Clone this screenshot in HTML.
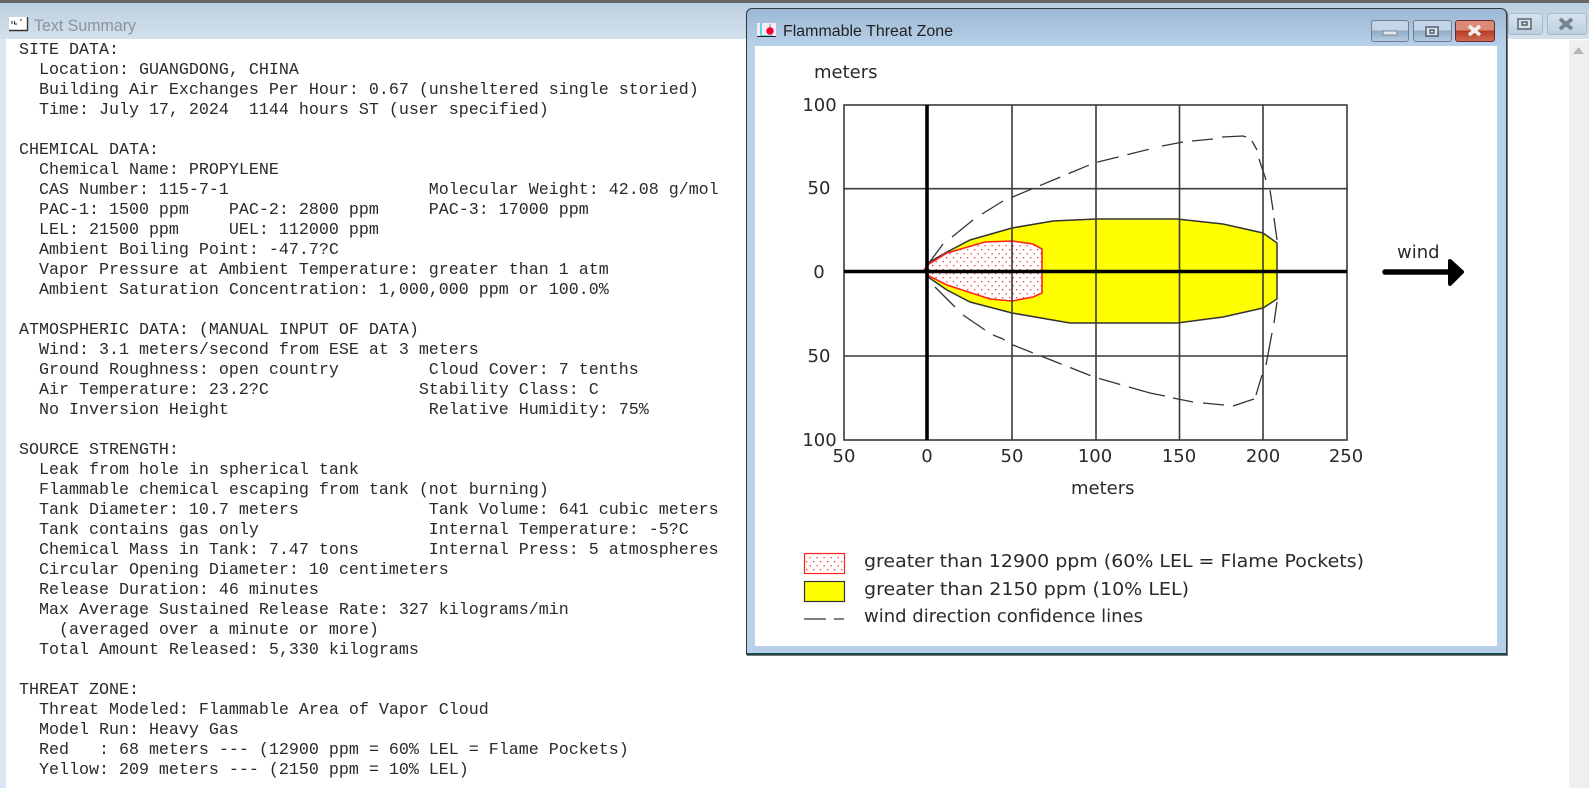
<!DOCTYPE html>
<html><head><meta charset="utf-8"><title>Flammable Threat Zone</title>
<style>
html,body{margin:0;padding:0;width:1589px;height:788px;overflow:hidden;background:#fff}
#bgtitle{position:absolute;left:0;top:0;width:1589px;height:39px;background:linear-gradient(#bccfe0,#d3e0ec);border-top:3px solid #666;box-sizing:border-box}
#leftb{position:absolute;left:0;top:39px;width:6px;height:749px;background:#dbe7f3}
#sb{position:absolute;left:1569px;top:40px;width:20px;height:748px;background:#efefef}
#txt{position:absolute;left:19px;top:41px;margin:0;font:16.67px/20px "Liberation Mono",monospace;color:#2a2a2a;white-space:pre}
#dlg{position:absolute;left:746px;top:8px;width:761px;height:647px;box-sizing:border-box;border:1px solid #2c3a3f;border-bottom:2px solid #1d4a52;border-radius:6px 6px 0 0;background:linear-gradient(#9db8d4,#b8d1ea 38px);box-shadow:1px 1px 0 #777}
#cl{position:absolute;left:755px;top:46px;width:742px;height:600px;background:#fff}
svg{position:absolute;left:0;top:0}
.btn{position:absolute;box-sizing:border-box;border:1px solid #6f7f90;border-radius:3px}
</style></head><body>
<div id="bgtitle"></div><div id="leftb"></div><div id="sb"></div>
<pre id="txt">SITE DATA:
  Location: GUANGDONG, CHINA
  Building Air Exchanges Per Hour: 0.67 (unsheltered single storied)
  Time: July 17, 2024  1144 hours ST (user specified)

CHEMICAL DATA:
  Chemical Name: PROPYLENE
  CAS Number: 115-7-1                    Molecular Weight: 42.08 g/mol
  PAC-1: 1500 ppm    PAC-2: 2800 ppm     PAC-3: 17000 ppm
  LEL: 21500 ppm     UEL: 112000 ppm
  Ambient Boiling Point: -47.7?C
  Vapor Pressure at Ambient Temperature: greater than 1 atm
  Ambient Saturation Concentration: 1,000,000 ppm or 100.0%

ATMOSPHERIC DATA: (MANUAL INPUT OF DATA)
  Wind: 3.1 meters/second from ESE at 3 meters
  Ground Roughness: open country         Cloud Cover: 7 tenths
  Air Temperature: 23.2?C               Stability Class: C
  No Inversion Height                    Relative Humidity: 75%

SOURCE STRENGTH:
  Leak from hole in spherical tank
  Flammable chemical escaping from tank (not burning)
  Tank Diameter: 10.7 meters             Tank Volume: 641 cubic meters
  Tank contains gas only                 Internal Temperature: -5?C
  Chemical Mass in Tank: 7.47 tons       Internal Press: 5 atmospheres
  Circular Opening Diameter: 10 centimeters
  Release Duration: 46 minutes
  Max Average Sustained Release Rate: 327 kilograms/min
    (averaged over a minute or more)
  Total Amount Released: 5,330 kilograms

THREAT ZONE:
  Threat Modeled: Flammable Area of Vapor Cloud
  Model Run: Heavy Gas
  Red   : 68 meters --- (12900 ppm = 60% LEL = Flame Pockets)
  Yellow: 209 meters --- (2150 ppm = 10% LEL)</pre>
<div class="btn" style="left:1508px;top:13px;width:35px;height:22px;background:linear-gradient(#d5e2ee,#bccfe0);border-color:#a9b8c6"></div>
<div class="btn" style="left:1547px;top:13px;width:40px;height:22px;background:linear-gradient(#d5e2ee,#bccfe0);border-color:#a9b8c6"></div>
<div id="dlg"></div>
<div id="cl"></div>
<div class="btn" style="left:1371px;top:20px;width:38px;height:22px;background:linear-gradient(#c3d5e6 45%,#90abc6 50%,#b5cbe0)"></div>
<div class="btn" style="left:1413px;top:20px;width:39px;height:22px;background:linear-gradient(#c3d5e6 45%,#90abc6 50%,#b5cbe0)"></div>
<div class="btn" style="left:1455px;top:20px;width:40px;height:22px;background:linear-gradient(#dc8a78 45%,#b73a22 50%,#cf6a55);border-color:#6b2a30"></div>
<svg width="1589" height="788" viewBox="0 0 1589 788" font-family="'DejaVu Sans',sans-serif" font-size="18" fill="#2a2a2a">
<defs><pattern id="dots" width="7" height="8" patternUnits="userSpaceOnUse">
<rect width="7" height="8" fill="#fff"/><rect x="1" y="1" width="1.3" height="1.3" fill="#f33"/><rect x="4.5" y="5" width="1.3" height="1.3" fill="#f33"/></pattern></defs>
<!-- bg title -->
<rect x="9" y="17" width="19" height="13" fill="#fff"/><path d="M9 30.5H28M27.5 17V31" stroke="#333" stroke-width="1.4" fill="none"/>
<path d="M12 21v3M14.5 21v3h2.5M20 20h2" stroke="#222" stroke-width="1" fill="none"/>
<text x="34" y="31" font-family="'Liberation Sans',sans-serif" font-size="16.5" fill="#8b949b" textLength="102" lengthAdjust="spacingAndGlyphs">Text Summary</text>
<path d="M1518 19h13v10h-13zM1522 22h5v3h-5z" fill="#d8e0e8" stroke="#59636d" stroke-width="1.5"/>
<path d="M1560 19l12 10M1572 19l-12 10" stroke="#78838d" stroke-width="3.8"/>
<path d="M1578.5 47L1584 54H1573Z" fill="#b5b5b5"/>
<!-- dialog title -->
<rect x="757" y="23" width="19" height="13" fill="#fbe9f4"/>
<path d="M761 23v13h12" stroke="#20d0f0" stroke-width="1.5" fill="none"/><path d="M770 24v4" stroke="#3aa" stroke-width="1"/>
<circle cx="770" cy="31" r="3.7" fill="#f0002a"/><path d="M757 36.5H776" stroke="#222" stroke-width="1"/>
<text x="783" y="36" font-family="'Liberation Sans',sans-serif" font-size="15.5" fill="#222" textLength="170" lengthAdjust="spacingAndGlyphs">Flammable Threat Zone</text>
<!-- dialog buttons -->
<rect x="1383" y="31" width="14" height="4" fill="#e4e8ec" stroke="#7a8896" stroke-width="1"/>
<path d="M1426 27h12v9h-12zM1430 30h4v3h-4z" fill="#dfe6ed" stroke="#4f5d6c" stroke-width="1.4"/>
<path d="M1469 26l11 9M1480 26l-11 9" stroke="#f4efee" stroke-width="3.6"/>
<!-- yellow -->
<path d="M926 271L928 263 947 252 970 240 1012 228 1053 221 1096 219 1177 219 1223 224 1263 233 1277 243V299L1263 308 1223 317 1177 323 1070 323 1012 313 970 302 947 290 928 277Z" fill="#ff0" stroke="#333" stroke-width="1.5"/>
<!-- red -->
<path d="M923 271L929 264 947 253 985 242 1012 241 1033 244 1042 249V293L1033 297 1012 301 990 299 947 285 929 276Z" fill="url(#dots)" stroke="#f22" stroke-width="1.6"/>
<!-- grid -->
<g stroke="#3a3a3a" stroke-width="1.6" fill="none">
<rect x="844" y="105" width="503" height="335"/>
<path d="M844 188.7H1347M844 356H1347M1012 105V440M1096 105V440M1179.5 105V440M1263 105V440"/>
</g>
<path d="M844 271.5H1347" stroke="#000" stroke-width="3.6"/>
<path d="M927 105V440" stroke="#000" stroke-width="3.6"/>
<!-- confidence lines -->
<g stroke="#333" stroke-width="1.3" fill="none">
<path d="M929 263L943 244M952 237L973 220M982 214L1003 201"/>
<path d="M1003 201L1094 163 1150 149" stroke-dasharray="22 9" stroke-dashoffset="-9"/>
<path d="M1162 146L1183 142M1192 141L1213 139M1222 137L1243 136 1246 137M1252 141L1257 150M1259 159L1266 180M1270 190L1273 210M1274 218L1277 240"/>
<path d="M1277 302L1274 323M1272 333L1266 365M1262 375L1256 395M1254 399L1233 406M1224 405L1203 403M1193 402L1173 398M1165 396L1150 393"/>
<path d="M1150 393L1094 377 1013 345 1003 339" stroke-dasharray="22 9"/>
<path d="M935 287L955 307M963 315L985 330M993 335L1003 339"/>
</g>
<!-- axis labels -->
<text x="814" y="78">meters</text>
<g text-anchor="middle"><text x="819.5" y="111">100</text><text x="819" y="194">50</text><text x="819" y="278">0</text><text x="819" y="362">50</text></g>
<g text-anchor="middle"><text x="844" y="462">50</text><text x="927" y="462">0</text><text x="1012" y="462">50</text><text x="1095" y="462">100</text><text x="1179" y="462">150</text><text x="1263" y="462">200</text><text x="1346" y="462">250</text></g>
<rect x="800" y="441" width="43" height="7" fill="#fff"/>
<text x="819.5" y="446" text-anchor="middle">100</text>
<text x="1071" y="494">meters</text>
<!-- wind -->
<text x="1397" y="258">wind</text>
<path d="M1385 272H1450" stroke="#000" stroke-width="5.5" stroke-linecap="round"/>
<path d="M1450 261L1462 272 1450 284Z" fill="#000" stroke="#000" stroke-width="4" stroke-linejoin="round"/>
<!-- legend -->
<rect x="804.5" y="553.5" width="40" height="20" fill="url(#dots)" stroke="#f22" stroke-width="1.2"/>
<rect x="804.5" y="581.5" width="40" height="20" fill="#ff0" stroke="#333" stroke-width="1.2"/>
<path d="M804 619H826M834 619H844" stroke="#333" stroke-width="1.3"/>
<text x="864" y="567" textLength="500" lengthAdjust="spacingAndGlyphs">greater than 12900 ppm (60% LEL = Flame Pockets)</text>
<text x="864" y="595" textLength="325" lengthAdjust="spacingAndGlyphs">greater than 2150 ppm (10% LEL)</text>
<text x="864" y="622" textLength="279" lengthAdjust="spacingAndGlyphs">wind direction confidence lines</text>
</svg>
</body></html>
